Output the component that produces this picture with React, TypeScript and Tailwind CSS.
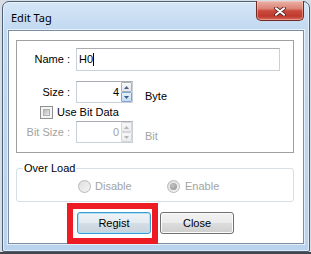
import React from "react";

function Arrow({ up, color }: { up: boolean; color: string }) {
  return (
    <svg width="5" height="3" viewBox="0 0 5 3">
      {up ? <path d="M2.5 0L5 3H0z" fill={color} /> : <path d="M0 0H5L2.5 3z" fill={color} />}
    </svg>
  );
}

function Spin({ value, disabled }: { value: string; disabled?: boolean }) {
  return (
    <div className="w-[57px] h-[22px] flex border border-[#c9d0d8] border-t-[#abadb3] bg-white">
      <div
        className={
          disabled
            ? "flex-1 text-right pr-[2px] leading-[20px] text-[#a3a3a3]"
            : "flex-1 text-right pr-[2px] leading-[20px] text-black"
        }
      >
        {value}
      </div>
      <div className="w-[11px] flex flex-col">
        {disabled ? (
          <>
            <div className="h-[10px] flex items-center justify-center border border-[#d6d6d6] rounded-[1px] bg-[linear-gradient(#f7f7f7,#ececec)]">
              <Arrow up color="#b5b5b5" />
            </div>
            <div className="h-[10px] flex items-center justify-center border border-[#d6d6d6] rounded-[1px] bg-[linear-gradient(#f7f7f7,#ececec)]">
              <Arrow up={false} color="#b5b5b5" />
            </div>
          </>
        ) : (
          <>
            <div className="h-[10px] flex items-center justify-center border border-[#a9b1ba] rounded-[1px] bg-[linear-gradient(#fafafa,#e3e5e8)]">
              <Arrow up color="#4c5f86" />
            </div>
            <div className="h-[10px] flex items-center justify-center border border-[#7ea7cf] rounded-[1px] bg-[linear-gradient(#e4f0fb,#c6dcf2)]">
              <Arrow up={false} color="#3e5b8e" />
            </div>
          </>
        )}
      </div>
    </div>
  );
}

function Radio({ checked }: { checked?: boolean }) {
  return (
    <div className="w-[13px] h-[13px] rounded-full border border-[#b9b9b9] bg-[linear-gradient(135deg,#dcdcdc,#f6f6f6)] flex items-center justify-center">
      {checked ? (
        <div className="w-[7px] h-[7px] rounded-full bg-[radial-gradient(circle_at_40%_35%,#c4c4c4,#8e8e8e)]" />
      ) : (
        <div className="w-[9px] h-[9px] rounded-full bg-[linear-gradient(135deg,#e2e2e2,#f2f2f2)]" />
      )}
    </div>
  );
}

export default function App() {
  return (
    <div className="w-[311px] h-[254px] bg-[#d7dde4] flex flex-col overflow-hidden font-['Liberation_Sans',Arial,sans-serif] text-[11px] text-black">
      <div className="ml-[2px] mt-[1px] w-[308px] h-[251px] shrink-0 rounded-t-[7px] rounded-b-[2px] border border-[#4d6074] bg-[linear-gradient(180deg,#d5e6f7_0%,#c4daf1_10%,#bed6ef_50%,#b9d3ee_100%)] shadow-[inset_0_0_0_1px_rgba(255,255,255,0.55)] px-[5px] pb-[7px] flex flex-col">
        <div className="h-[28px] shrink-0 flex justify-between items-start">
          <div className="pl-[3px] pt-[9px] font-['Noto_Sans',sans-serif] text-[11px] leading-[13px] text-black">
            Edit Tag
          </div>
          <div className="-mt-px w-[48px] h-[20px] rounded-b-[5px] border border-t-0 border-[#6e2a22] bg-[linear-gradient(#eab2a8_0%,#dc8376_40%,#c9493d_52%,#c03a2e_80%,#d66a5b_100%)] shadow-[inset_0_0_0_1px_rgba(255,210,200,0.45)] flex items-center justify-center pt-[1px]">
            <svg width="12" height="9" viewBox="0 0 12 9">
              <path d="M2 1.2L10 7.8M10 1.2L2 7.8" stroke="#4a1e19" strokeWidth="3.6" strokeLinecap="round" />
              <path d="M2 1.2L10 7.8M10 1.2L2 7.8" stroke="#ffffff" strokeWidth="2" strokeLinecap="round" />
            </svg>
          </div>
        </div>
        <div className="flex-1 border border-[#7c8ea2] bg-white shadow-[0_0_0_1px_rgba(255,255,255,0.6)] flex flex-col">
          <div className="ml-[7px] mr-[9px] mt-[9px] h-[113px] shrink-0 border border-[#a0a0a0] pt-[7px] flex flex-col">
            <div className="flex items-center">
              <div className="w-[53px] text-right leading-[13px]">Name :</div>
              <div className="ml-[6px] w-[204px] h-[23px] border border-[#c9d0d8] border-t-[#abadb3] flex items-center pl-[2px]">
                <span className="leading-[13px]">H0</span>
                <span className="w-px h-[13px] bg-black" />
              </div>
            </div>
            <div className="mt-[10px] flex items-center h-[22px]">
              <div className="w-[53px] text-right leading-[13px]">Size :</div>
              <div className="ml-[6px]">
                <Spin value="4" />
              </div>
              <div className="ml-[12px] self-end leading-[13px]">Byte</div>
            </div>
            <div className="mt-[3px] flex items-center h-[13px]">
              <div className="ml-[23px] w-[13px] h-[13px] border border-[#8e8f8f] bg-[#f4f4f4] p-[2px]">
                <div className="w-full h-full bg-[linear-gradient(135deg,#b5b9be,#e9eaeb)] border border-[#aeb2b7]" />
              </div>
              <div className="ml-[4px] leading-[13px]">Use Bit Data</div>
            </div>
            <div className="mt-[2px] flex items-center h-[22px]">
              <div className="w-[53px] text-right leading-[13px] text-[#a3a3a3]">Bit Size :</div>
              <div className="ml-[6px]">
                <Spin value="0" disabled />
              </div>
              <div className="ml-[12px] self-end leading-[13px] text-[#a3a3a3]">Bit</div>
            </div>
          </div>
          <div className="relative ml-[7px] mr-[9px] mt-[15px] h-[34px] shrink-0 rounded-[3px] border border-[#d5dfe5] pt-[11px] flex">
            <div className="absolute left-[6px] -top-[7px] px-[1px] bg-white leading-[13px]">Over Load</div>
            <div className="ml-[61px] w-[89px] flex items-center h-[13px]">
              <Radio />
              <div className="ml-[4px] leading-[13px] text-[#a3a3a3]">Disable</div>
            </div>
            <div className="flex items-center h-[13px]">
              <Radio checked />
              <div className="ml-[5px] leading-[13px] text-[#a3a3a3]">Enable</div>
            </div>
          </div>
          <div className="mt-[10px] flex">
            <div className="relative ml-[68px]">
              <div className="w-[74px] h-[22px] rounded-[3px] border border-[#3c9bd1] bg-[linear-gradient(#eef3f7,#e4ebf0_50%,#d5dee6_50%,#c7d3dd)] shadow-[inset_0_0_0_1px_#aee0f6] flex items-center justify-center leading-[13px]">
                Regist
              </div>
              <div className="absolute -left-[10px] -top-[9px] -right-[7px] -bottom-[10px] border-[6px] border-[#ed1c24] pointer-events-none" />
            </div>
            <div className="ml-[9px] w-[74px] h-[22px] rounded-[3px] border border-[#707070] bg-[linear-gradient(#f2f2f2,#ebebeb_50%,#dddddd_50%,#cfcfcf)] shadow-[inset_0_0_0_1px_#fcfcfc] flex items-center justify-center leading-[13px]">
              Close
            </div>
          </div>
        </div>
      </div>
      <div className="flex-1 bg-[#43474d]" />
    </div>
  );
}
